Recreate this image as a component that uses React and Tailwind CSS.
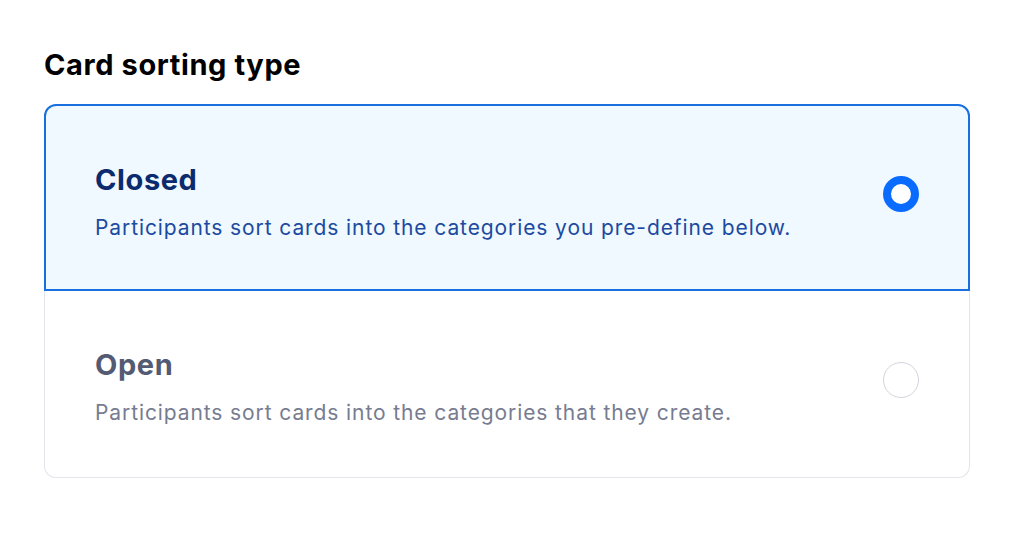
import { useState } from "react";

const options = [
  {
    id: "closed",
    title: "Closed",
    text: "Participants sort cards into the categories you pre-define below.",
  },
  {
    id: "open",
    title: "Open",
    text: "Participants sort cards into the categories that they create.",
  },
];

export default function App() {
  const [value, setValue] = useState("closed");

  return (
    <div
      className="min-h-screen bg-white px-[44px] pt-[47px]"
      style={{ fontFamily: "Inter, 'Noto Sans', sans-serif" }}
    >
      <h2 className="text-[29px] font-bold leading-[36px] tracking-[0.6px] text-black">
        Card sorting type
      </h2>
      <div className="mt-[21px] flex w-[926px] flex-col">
        {options.map((o, i) => {
          const on = value === o.id;
          const shape = i === 0 ? "rounded-t-[12px]" : "rounded-b-[12px]";
          const border = on
            ? "border-2 border-[#1a6fe0] bg-[#eff9ff] px-[49px]"
            : i === 0
            ? "border border-b-0 border-[#e3e4ea] px-[50px]"
            : "border border-t-0 border-[#e3e4ea] px-[50px]";
          return (
            <button
              key={o.id}
              onClick={() => setValue(o.id)}
              className={`flex h-[187px] items-center justify-between text-left ${shape} ${border}`}
            >
              <div className={`flex flex-col ${on ? "pt-[9px]" : "pt-[5px]"}`}>
                <span
                  className={`text-[29px] font-bold leading-[36px] tracking-[0.6px] ${
                    on ? "text-[#0b2b6e]" : "text-[#535a73]"
                  }`}
                >
                  {o.title}
                </span>
                <span
                  className={`mt-[16px] text-[21px] leading-[28px] tracking-[0.9px] ${
                    on ? "text-[#1d4aa0]" : "text-[#777c91]"
                  }`}
                >
                  {o.text}
                </span>
              </div>
              {on ? (
                <span className="mb-[7px] h-[36px] w-[36px] rounded-full border-[8px] border-[#0a6cff] bg-white" />
              ) : (
                <span className="mb-[8px] h-[36px] w-[36px] rounded-full border-[1.5px] border-[#d2d4dc] bg-white" />
              )}
            </button>
          );
        })}
      </div>
    </div>
  );
}
